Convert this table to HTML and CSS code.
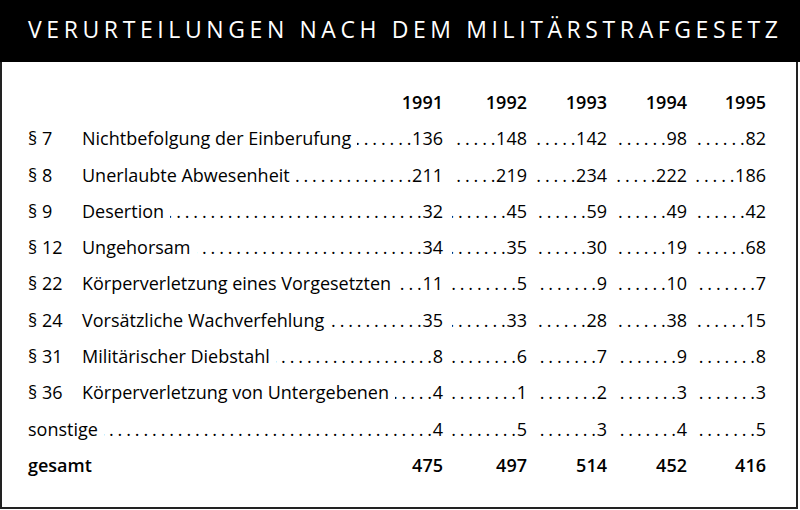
FILE: index.html
```html
<!DOCTYPE html>
<html lang="de">
<head>
<meta charset="utf-8">
<title>Verurteilungen nach dem Militärstrafgesetz</title>
<link rel="stylesheet" href="styles.css">
</head>
<body>
<div class="page">
  <header class="head"><h1 class="title">VERURTEILUNGEN NACH DEM MILITÄRSTRAFGESETZ</h1></header>
  <div class="box">
    <div class="table">
      <div class="row years">
        <span class="sec"></span>
        <span class="cell lab"><span class="num">1991</span></span>
        <span class="cell"><span class="num">1992</span></span>
        <span class="cell"><span class="num">1993</span></span>
        <span class="cell"><span class="num">1994</span></span>
        <span class="cell"><span class="num">1995</span></span>
      </div>
      <div class="row">
        <span class="sec">§ 7</span>
        <span class="cell lab"><span class="txt">Nichtbefolgung der Einberufung</span><span class="lead"></span><span class="num">136</span></span>
        <span class="cell"><span class="lead"></span><span class="num">148</span></span>
        <span class="cell"><span class="lead"></span><span class="num">142</span></span>
        <span class="cell"><span class="lead"></span><span class="num">98</span></span>
        <span class="cell"><span class="lead"></span><span class="num">82</span></span>
      </div>
      <div class="row">
        <span class="sec">§ 8</span>
        <span class="cell lab"><span class="txt">Unerlaubte Abwesenheit</span><span class="lead"></span><span class="num">211</span></span>
        <span class="cell"><span class="lead"></span><span class="num">219</span></span>
        <span class="cell"><span class="lead"></span><span class="num">234</span></span>
        <span class="cell"><span class="lead"></span><span class="num">222</span></span>
        <span class="cell"><span class="lead"></span><span class="num">186</span></span>
      </div>
      <div class="row">
        <span class="sec">§ 9</span>
        <span class="cell lab"><span class="txt">Desertion</span><span class="lead"></span><span class="num">32</span></span>
        <span class="cell"><span class="lead"></span><span class="num">45</span></span>
        <span class="cell"><span class="lead"></span><span class="num">59</span></span>
        <span class="cell"><span class="lead"></span><span class="num">49</span></span>
        <span class="cell"><span class="lead"></span><span class="num">42</span></span>
      </div>
      <div class="row">
        <span class="sec">§ 12</span>
        <span class="cell lab"><span class="txt">Ungehorsam</span><span class="lead"></span><span class="num">34</span></span>
        <span class="cell"><span class="lead"></span><span class="num">35</span></span>
        <span class="cell"><span class="lead"></span><span class="num">30</span></span>
        <span class="cell"><span class="lead"></span><span class="num">19</span></span>
        <span class="cell"><span class="lead"></span><span class="num">68</span></span>
      </div>
      <div class="row">
        <span class="sec">§ 22</span>
        <span class="cell lab"><span class="txt">Körperverletzung eines Vorgesetzten</span><span class="lead"></span><span class="num">11</span></span>
        <span class="cell"><span class="lead"></span><span class="num">5</span></span>
        <span class="cell"><span class="lead"></span><span class="num">9</span></span>
        <span class="cell"><span class="lead"></span><span class="num">10</span></span>
        <span class="cell"><span class="lead"></span><span class="num">7</span></span>
      </div>
      <div class="row">
        <span class="sec">§ 24</span>
        <span class="cell lab"><span class="txt">Vorsätzliche Wachverfehlung</span><span class="lead"></span><span class="num">35</span></span>
        <span class="cell"><span class="lead"></span><span class="num">33</span></span>
        <span class="cell"><span class="lead"></span><span class="num">28</span></span>
        <span class="cell"><span class="lead"></span><span class="num">38</span></span>
        <span class="cell"><span class="lead"></span><span class="num">15</span></span>
      </div>
      <div class="row">
        <span class="sec">§ 31</span>
        <span class="cell lab"><span class="txt">Militärischer Diebstahl</span><span class="lead"></span><span class="num">8</span></span>
        <span class="cell"><span class="lead"></span><span class="num">6</span></span>
        <span class="cell"><span class="lead"></span><span class="num">7</span></span>
        <span class="cell"><span class="lead"></span><span class="num">9</span></span>
        <span class="cell"><span class="lead"></span><span class="num">8</span></span>
      </div>
      <div class="row">
        <span class="sec">§ 36</span>
        <span class="cell lab"><span class="txt">Körperverletzung von Untergebenen</span><span class="lead"></span><span class="num">4</span></span>
        <span class="cell"><span class="lead"></span><span class="num">1</span></span>
        <span class="cell"><span class="lead"></span><span class="num">2</span></span>
        <span class="cell"><span class="lead"></span><span class="num">3</span></span>
        <span class="cell"><span class="lead"></span><span class="num">3</span></span>
      </div>
      <div class="row">
        <span class="cell lab wide"><span class="txt">sonstige</span><span class="lead"></span><span class="num">4</span></span>
        <span class="cell"><span class="lead"></span><span class="num">5</span></span>
        <span class="cell"><span class="lead"></span><span class="num">3</span></span>
        <span class="cell"><span class="lead"></span><span class="num">4</span></span>
        <span class="cell"><span class="lead"></span><span class="num">5</span></span>
      </div>
      <div class="row total">
        <span class="cell lab wide"><span class="txt">gesamt</span><span class="gap"></span><span class="num">475</span></span>
        <span class="cell"><span class="num">497</span></span>
        <span class="cell"><span class="num">514</span></span>
        <span class="cell"><span class="num">452</span></span>
        <span class="cell"><span class="num">416</span></span>
      </div>
    </div>
  </div>
</div>
</body>
</html>
```
FILE: styles.css
```css
html, body {
  margin: 0;
  padding: 0;
  background: #fff;
}
body {
  font-family: "Open Sans", "Noto Sans", "Liberation Sans", sans-serif;
  color: #000;
}
.page {
  width: 800px;
  height: 510px;
  overflow: hidden;
}
.head {
  background: #000;
  height: 62px;
  display: flex;
  align-items: center;
  padding: 0 0 4px 28px;
  box-sizing: border-box;
}
.title {
  margin: 0;
  color: #fff;
  font-weight: 400;
  font-size: 23px;
  letter-spacing: 4.6px;
  line-height: 1;
  white-space: nowrap;
}
.box {
  width: 798px;
  height: 447px;
  box-sizing: border-box;
  border: 2px solid #222;
  border-top: 0;
  padding: 22px 30px 0 26px;
}
.table {
  display: grid;
  grid-template-columns: 54px 1fr 84px 80px 80px 79px;
  font-size: 18px;
  line-height: 36.3px;
}
.row {
  display: contents;
}
.sec {
  white-space: nowrap;
}
.cell {
  display: flex;
  align-items: baseline;
  justify-content: flex-end;
  white-space: nowrap;
  min-width: 0;
}
.cell .txt {
  flex: none;
}
.wide {
  grid-column: 1 / 3;
}
.lead {
  flex: 1;
  min-width: 0;
  overflow: hidden;
  direction: rtl;
  margin-left: 9px;
  letter-spacing: -0.4px;
}
.lab .lead {
  margin-left: 6px;
}
.lead::before {
  content: ". . . . . . . . . . . . . . . . . . . . . . . . . . . . . . . . . . . . . . . . . . . . . . . . . . . . . . . .";
}
.gap {
  flex: 1;
}
.num {
  flex: none;
  padding-left: 1px;
}
.years,
.total {
  font-weight: 600;
}
```
